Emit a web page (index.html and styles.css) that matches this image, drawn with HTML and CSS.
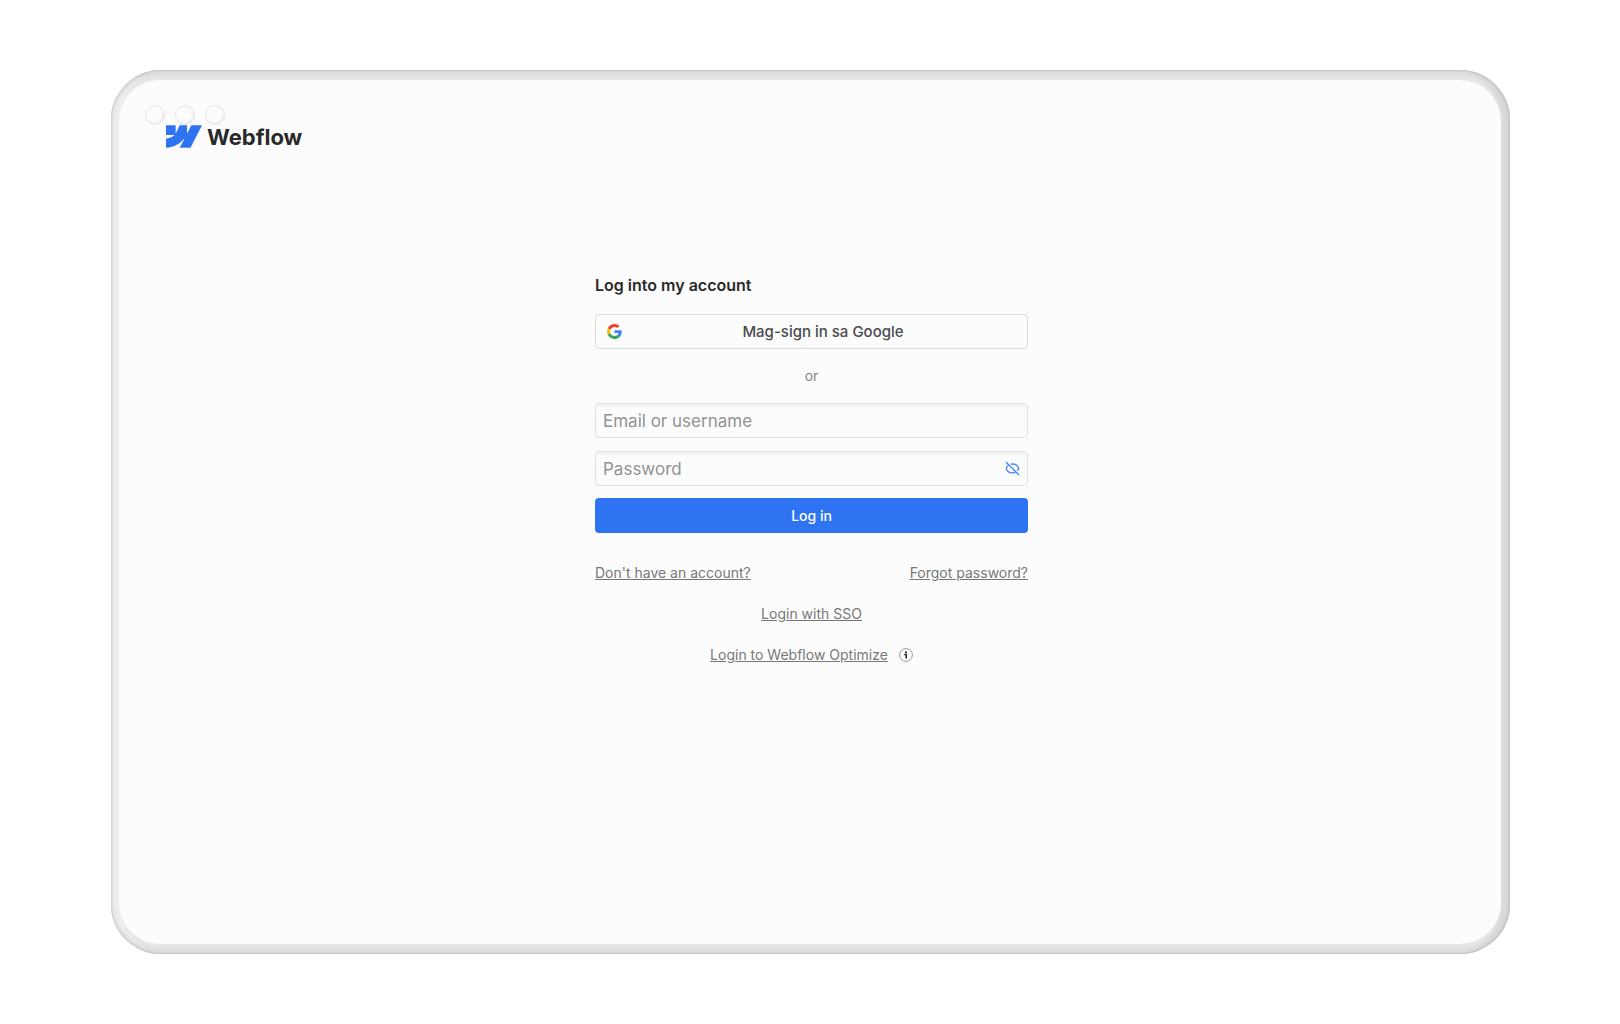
FILE: index.html
```html
<!DOCTYPE html>
<html lang="en">
<head>
    <meta charset="UTF-8">
    <meta name="viewport" content="width=device-width, initial-scale=1.0">
    <title>Log in - Webflow</title>
    <link rel="stylesheet" href="styles.css">
</head>
<body>

<div class="frame">
    <div class="screen">
        <div class="dots">
            <span class="dot"></span>
            <span class="dot"></span>
            <span class="dot"></span>
        </div>

        <header class="header">
            <a class="logo" href="#">
                <svg class="logo-mark" viewBox="0 0 1080 674" aria-hidden="true">
                    <path fill="#2e74f2" d="M1080 0L735 674H412L556 394H549C430 549 253 651 0 674V398C0 398 162 389 257 289H0V0H289V237H295L413 0H632V236H638L761 0Z"/>
                </svg>
                <span class="logo-text">Webflow</span>
            </a>
        </header>

        <main class="main">
            <form class="login-form">
                <h1 class="title">Log into my account</h1>

                <button type="button" class="google-btn">
                    <svg class="google-icon" viewBox="0 0 48 48" aria-hidden="true">
                        <path fill="#ea4335" d="M24 9.500c3.540 0 6.710 1.220 9.210 3.600l6.850-6.850C35.900 2.380 30.470 0 24 0 14.620 0 6.510 5.380 2.560 13.220l7.980 6.190C12.430 13.720 17.740 9.500 24 9.500z"/>
                        <path fill="#4285f4" d="M46.980 24.550c0-1.570-.15-3.090-.38-4.550H24v9.020h12.940c-.58 2.960-2.260 5.480-4.780 7.180l7.730 6c4.510-4.180 7.090-10.360 7.090-17.650z"/>
                        <path fill="#fbbc05" d="M10.530 28.590c-.48-1.450-.76-2.990-.76-4.590s.27-3.140.76-4.590l-7.980-6.190C.92 16.460 0 20.120 0 24c0 3.880.92 7.540 2.560 10.780l7.970-6.190z"/>
                        <path fill="#34a853" d="M24 48c6.480 0 11.930-2.130 15.890-5.810l-7.730-6c-2.150 1.450-4.920 2.300-8.160 2.300-6.260 0-11.570-4.220-13.470-9.910l-7.980 6.190C6.510 42.620 14.620 48 24 48z"/>
                    </svg>
                    <span class="google-text">Mag-sign in sa Google</span>
                </button>

                <p class="or">or</p>

                <input class="field" type="text" placeholder="Email or username" aria-label="Email or username">

                <div class="password">
                    <input class="field" type="password" placeholder="Password" aria-label="Password">
                    <button type="button" class="toggle" aria-label="Show password">
                        <svg class="toggle-icon" viewBox="0 0 16 16" fill="none" stroke="#468af7" stroke-width="1.500" aria-hidden="true">
                            <path d="M1 1 15 15"/>
                            <path d="M4 4.300C2.700 5.200 1.800 6.400 1.300 8 2.300 11 4.900 12.700 8 12.700c1.200 0 2.300-.3 3.200-.8"/>
                            <path d="M6.200 3.500C10.300 2.700 13.500 4.500 14.700 8c-.3.900-.8 1.700-1.400 2.400"/>
                        </svg>
                    </button>
                </div>

                <button type="submit" class="login-btn">Log in</button>

                <div class="links">
                    <a href="#">Don't have an account?</a>
                    <a href="#">Forgot password?</a>
                </div>
                <div class="links centered">
                    <a href="#">Login with SSO</a>
                </div>
                <div class="links centered">
                    <a href="#">Login to Webflow Optimize</a>
                    <svg class="info-icon" viewBox="0 0 14 14" aria-hidden="true">
                        <circle cx="7" cy="7" r="6.400" fill="none" stroke="#9a9a9a"/>
                        <circle cx="7" cy="4.200" r="1" fill="#222"/>
                        <path d="M5.300 6.500H7.200V10.500" fill="none" stroke="#222" stroke-width="1.500"/>
                    </svg>
                </div>
            </form>
        </main>
    </div>
</div>

</body>
</html>
```

FILE: styles.css
```css
* {
    box-sizing: border-box;
}
body {
    margin: 0;
    min-height: 100vh;
    display: flex;
    padding: 70px 110px 70px 111px;
    background: #fff;
    color: #292929;
    font-family: Inter, "Liberation Sans", sans-serif;
    font-size: 14px;
}
.frame {
    flex: 1;
    display: flex;
    padding: 10px 9px 10px 8px;
    border-radius: 50px;
    background: #e6e6e6;
    box-shadow: inset 0 1px 1px #c8c8c8, inset 0 -1px 1px #c4c4c4,
        inset -2px 0 2px #c8c8c8, inset 1px 0 1px #dedede,
        inset 0 4px 5px #d8d8d8, inset 0 -4px 5px #d8d8d8,
        inset -9px 0 3px #dadada, inset 9px 0 3px #efefef;
}
.screen {
    flex: 1;
    position: relative;
    padding: 45px 44px 45px 47px;
    border-radius: 41px;
    background: #fcfcfc;
}
.dots {
    position: absolute;
    top: 25px;
    left: 26px;
    display: flex;
    gap: 10px;
}
.dot {
    width: 20px;
    height: 20px;
    border: 1px solid #e6e6e6;
    border-radius: 50%;
    background: #fcfcfc;
    box-shadow: inset -1px -1px 2px #e9e9e9;
}
.header {
    display: flex;
}
.logo {
    display: flex;
    align-items: center;
    gap: 5px;
    height: 23px;
    color: #292929;
    text-decoration: none;
}
.logo-mark {
    width: 36px;
    height: 23px;
}
.logo-text {
    font-size: 22px;
    font-weight: 700;
    line-height: 24px;
}
.main {
    display: flex;
    justify-content: center;
    padding-top: 126px;
}
.login-form {
    display: flex;
    flex-direction: column;
    width: 433px;
}
.title {
    margin: 0 0 18px;
    font-size: 16px;
    font-weight: 600;
    line-height: 22px;
}
.google-btn {
    display: flex;
    align-items: center;
    gap: 8px;
    height: 35px;
    padding: 0 11px;
    border: 1px solid #dadce0;
    border-radius: 4px;
    background: #fcfcfc;
    color: #4a4b4e;
    font-family: inherit;
    font-size: 15px;
    font-weight: 500;
}
.google-icon {
    width: 15px;
    height: 15px;
}
.google-text {
    flex: 1;
    text-align: center;
}
.or {
    margin: 17px 0;
    color: #858585;
    line-height: 20px;
    text-align: center;
}
.field {
    width: 100%;
    height: 35px;
    padding: 0 7px;
    border: 1px solid #e0e0e0;
    border-radius: 4px;
    background: #fcfcfc;
    box-shadow: inset 0 3px 3px -1px #f2f2f2;
    font-family: inherit;
    font-size: 17px;
}
.field::placeholder {
    color: #929292;
}
.password {
    position: relative;
    margin: 13px 0 12px;
}
.toggle {
    position: absolute;
    top: 0;
    right: 8px;
    display: flex;
    align-items: center;
    height: 35px;
    padding: 0;
    border: none;
    background: none;
}
.toggle-icon {
    width: 15px;
    height: 15px;
}
.login-btn {
    height: 35px;
    margin-bottom: 30px;
    border: none;
    border-radius: 4px;
    background: #2e74f2;
    color: #fff;
    font-family: inherit;
    font-size: 14px;
    font-weight: 500;
}
.links {
    display: flex;
    justify-content: space-between;
    align-items: center;
    margin-bottom: 21px;
    line-height: 20px;
}
.links a {
    color: #787878;
    text-decoration: underline;
}
.centered {
    justify-content: center;
    gap: 11px;
}
.info-icon {
    width: 14px;
    height: 14px;
}
```
